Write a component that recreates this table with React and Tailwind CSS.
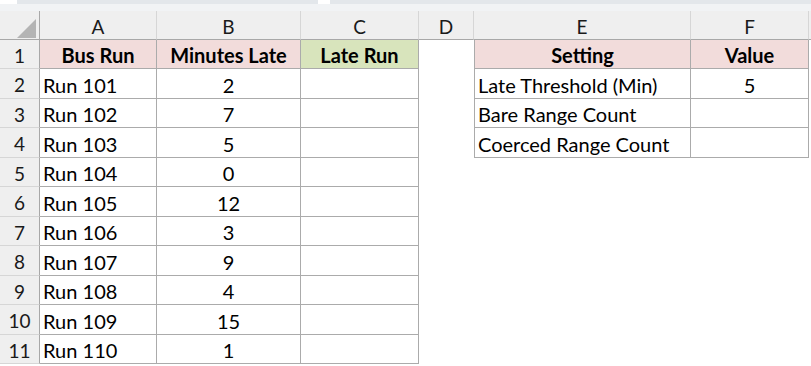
import React from 'react';

const COLS = ['A', 'B', 'C', 'D', 'E', 'F'];

const RUNS = [
  ['Run 101', 2],
  ['Run 102', 7],
  ['Run 103', 5],
  ['Run 104', 0],
  ['Run 105', 12],
  ['Run 106', 3],
  ['Run 107', 9],
  ['Run 108', 4],
  ['Run 109', 15],
  ['Run 110', 1],
];

const SETTINGS = [
  ['Late Threshold (Min)', '5'],
  ['Bare Range Count', ''],
  ['Coerced Range Count', ''],
];

// table cell borders
const cell = 'flex items-center pt-[2px] border-r border-b border-[#ababab] text-[20px] text-black leading-none whitespace-nowrap overflow-hidden';

function Corner() {
  return (
    <div className="relative bg-[#efefef] border-r border-b border-[#a8a8a8]">
      <svg className="absolute left-[17px] top-[8px]" width="19" height="19" viewBox="0 0 19 19">
        <polygon points="19,0 19,19 0,19" fill="#b4b4b4" />
      </svg>
    </div>
  );
}

function RowHead({ n }) {
  return (
    <div className="flex items-center justify-center pt-[2px] bg-[#efefef] border-r border-r-[#a8a8a8] border-b border-b-[#d6d6d6] text-[19px] text-[#1a1a1a] leading-none">
      {n}
    </div>
  );
}

function Blank() {
  return <div className="bg-white" />;
}

export default function App() {
  return (
    <div className="w-[811px] h-[366px] overflow-hidden bg-white" style={{ fontFamily: 'Lato, "Open Sans", sans-serif' }}>
      {/* formula bar remnant */}
      <div className="h-[11px] bg-[#f1f3f5] flex items-start">
        <div className="w-[17px] h-[4px] bg-white" />
        <div className="w-[301px] h-[4px] bg-[#e3e7eb]" />
        <div className="w-[12px] h-[4px] bg-white" />
        <div className="flex-1 h-[4px] bg-[#e3e7eb]" />
      </div>

      <div className="grid grid-cols-[40px_117px_144px_118px_55px_217px_118px_2px] grid-rows-[29px_29px_30px_29px_30px_29px_30px_29px_30px_29px_30px_29px]">
        {/* column headers */}
        <Corner />
        {COLS.map((c) => (
          <div key={c} className="flex items-center justify-center pt-[2px] bg-[#efefef] border-r border-r-[#d6d6d6] border-b border-b-[#a8a8a8] text-[19px] text-[#1a1a1a] leading-none">
            {c}
          </div>
        ))}
        <div className="bg-[#efefef] border-b border-b-[#a8a8a8]" />

        {/* row 1 */}
        <RowHead n={1} />
        <div className={`${cell} justify-center font-bold bg-[#f2dcdb]`}>Bus Run</div>
        <div className={`${cell} justify-center font-bold bg-[#f2dcdb]`}>Minutes Late</div>
        <div className={`${cell} justify-center font-bold bg-[#d8e4bc]`}>Late Run</div>
        <Blank />
        <div className={`${cell} border-l justify-center font-bold bg-[#f2dcdb]`}>Setting</div>
        <div className={`${cell} justify-center font-bold bg-[#f2dcdb]`}>Value</div>
        <Blank />

        {RUNS.map(([name, mins], i) => {
          const setting = SETTINGS[i];
          return (
            <React.Fragment key={name}>
              <RowHead n={i + 2} />
              <div className={`${cell} pl-[3px]`}>{name}</div>
              <div className={`${cell} justify-center`}>{mins}</div>
              <div className={cell} />
              <Blank />
              {setting ? (
                <>
                  <div className={`${cell} border-l pl-[3px]`}>{setting[0]}</div>
                  <div className={`${cell} justify-center`}>{setting[1]}</div>
                </>
              ) : (
                <>
                  <Blank />
                  <Blank />
                </>
              )}
              <Blank />
            </React.Fragment>
          );
        })}
      </div>
    </div>
  );
}
